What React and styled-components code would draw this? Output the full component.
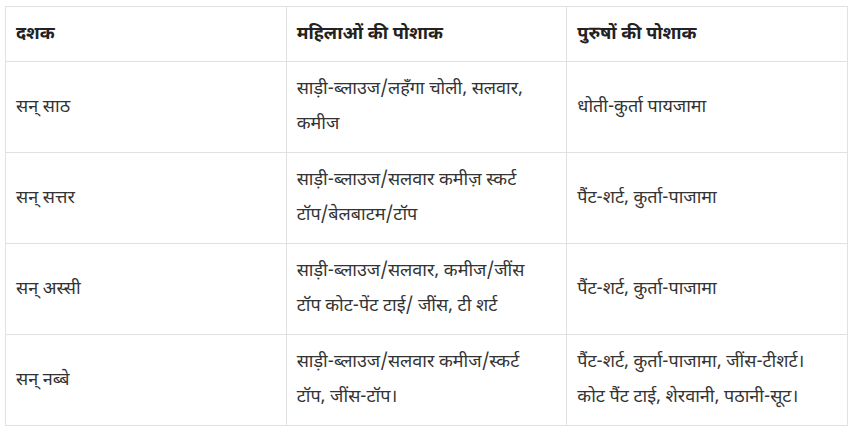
// दशक-वार पोशाक तालिका
import React from "react";
import styled, { createGlobalStyle } from "styled-components";

const GlobalStyle = createGlobalStyle`
  body {
    margin: 0;
    background: #ffffff;
    font-family: "Noto Sans Devanagari", "Noto Sans", "Liberation Sans", sans-serif;
  }
`;

const Page = styled.div`
  padding: 6px 8px 0 5px;
`;

const Table = styled.table`
  width: 843px;
  border-collapse: collapse;
  table-layout: fixed;
  font-size: 18px;
  color: #333333;
`;

const Th = styled.th`
  border: 1px solid #e1e1e1;
  padding: 10px 10px 9px;
  line-height: 35px;
  text-align: left;
  font-weight: 700;
  color: #222222;
`;

const Td = styled.td`
  border: 1px solid #e1e1e1;
  padding: 10px 10px;
  line-height: 35px;
  text-align: left;
  vertical-align: middle;
`;

const Line = styled.span`
  display: block;
  white-space: nowrap;
`;

const rows = [
  {
    decade: "सन् साठ",
    women: ["साड़ी-ब्लाउज/लहँगा चोली, सलवार,", "कमीज"],
    men: ["धोती-कुर्ता पायजामा"],
  },
  {
    decade: "सन् सत्तर",
    women: ["साड़ी-ब्लाउज/सलवार कमीज़ स्कर्ट", "टॉप/बेलबाटम/टॉप"],
    men: ["पैंट-शर्ट, कुर्ता-पाजामा"],
  },
  {
    decade: "सन् अस्सी",
    women: ["साड़ी-ब्लाउज/सलवार, कमीज/जींस", "टॉप कोट-पेंट टाई/ जींस, टी शर्ट"],
    men: ["पैंट-शर्ट, कुर्ता-पाजामा"],
  },
  {
    decade: "सन् नब्बे",
    women: ["साड़ी-ब्लाउज/सलवार कमीज/स्कर्ट", "टॉप, जींस-टॉप।"],
    men: ["पैंट-शर्ट, कुर्ता-पाजामा, जींस-टीशर्ट।", "कोट पैंट टाई, शेरवानी, पठानी-सूट।"],
  },
];

function App() {
  return (
    <Page>
      <GlobalStyle />
      <Table>
        <thead>
          <tr>
            <Th>दशक</Th>
            <Th>महिलाओं की पोशाक</Th>
            <Th>पुरुषों की पोशाक</Th>
          </tr>
        </thead>
        <tbody>
          {rows.map((row) => (
            <tr key={row.decade}>
              <Td>{row.decade}</Td>
              <Td>
                {row.women.map((l) => (
                  <Line key={l}>{l}</Line>
                ))}
              </Td>
              <Td>
                {row.men.map((l) => (
                  <Line key={l}>{l}</Line>
                ))}
              </Td>
            </tr>
          ))}
        </tbody>
      </Table>
    </Page>
  );
}

export default App;
